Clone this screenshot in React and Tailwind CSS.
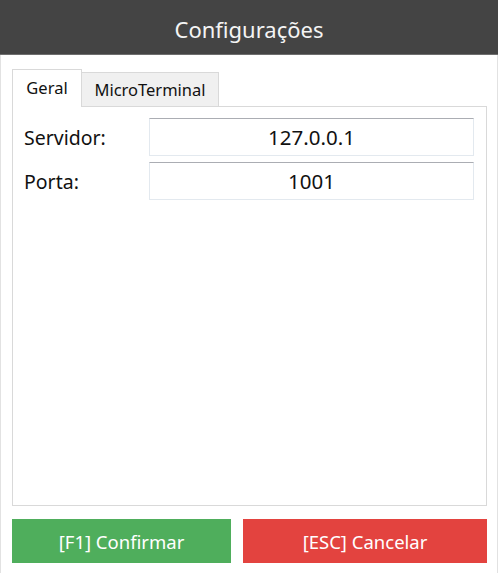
export default function App() {
  return (
    <div className="w-[498px] h-[573px] flex flex-col bg-white font-['Noto_Sans',sans-serif]">
      <div className="h-[55px] shrink-0 bg-[#444444] border-b border-[#6e6e6e] flex items-center justify-center">
        <span className="text-[22px] text-[#f4f4f4] leading-none pt-[4px]">Configurações</span>
      </div>
      <div className="flex-1 flex flex-col border-x border-[#e2e2e2] pl-[11px] pr-[10px] pt-[14px] pb-[10px]">
        <div className="flex items-end mb-[-1px] relative z-10">
          <div className="w-[70px] h-[38px] bg-white border-x border-t border-[#d9d9d9] flex items-center justify-center pb-[1px] text-[16.5px] text-[#111]">
            Geral
          </div>
          <div className="w-[137px] h-[35px] bg-[#f0f0f0] border border-l-0 border-[#d9d9d9] flex items-center justify-center pt-[1px] text-[16.5px] text-[#111]">
            MicroTerminal
          </div>
        </div>
        <div className="h-[400px] border border-[#d9d9d9] pt-[11px] pl-[11px] pr-[12px] flex flex-col gap-[6px]">
          <div className="flex items-center">
            <span className="w-[125px] text-[19.5px] text-[#111] pt-[2px]">Servidor:</span>
            <div className="flex-1 h-[38px] border border-[#e3e9ef] border-t-[#abadb3] flex items-center justify-center text-[20.5px] text-[#111] pt-[1px]">
              127.0.0.1
            </div>
          </div>
          <div className="flex items-center">
            <span className="w-[125px] text-[19.5px] text-[#111] pt-[2px]">Porta:</span>
            <div className="flex-1 h-[38px] border border-[#e3e9ef] border-t-[#abadb3] flex items-center justify-center text-[20.5px] text-[#111] pt-[1px]">
              1001
            </div>
          </div>
        </div>
        <div className="mt-[13px] flex gap-[12px]">
          <div className="w-[219px] h-[44px] bg-[#4fae5c] text-white text-[18.5px] flex items-center justify-center pt-[1px]">
            [F1] Confirmar
          </div>
          <div className="flex-1 h-[44px] bg-[#e3433f] text-white text-[18.5px] flex items-center justify-center pt-[1px]">
            [ESC] Cancelar
          </div>
        </div>
      </div>
    </div>
  );
}
